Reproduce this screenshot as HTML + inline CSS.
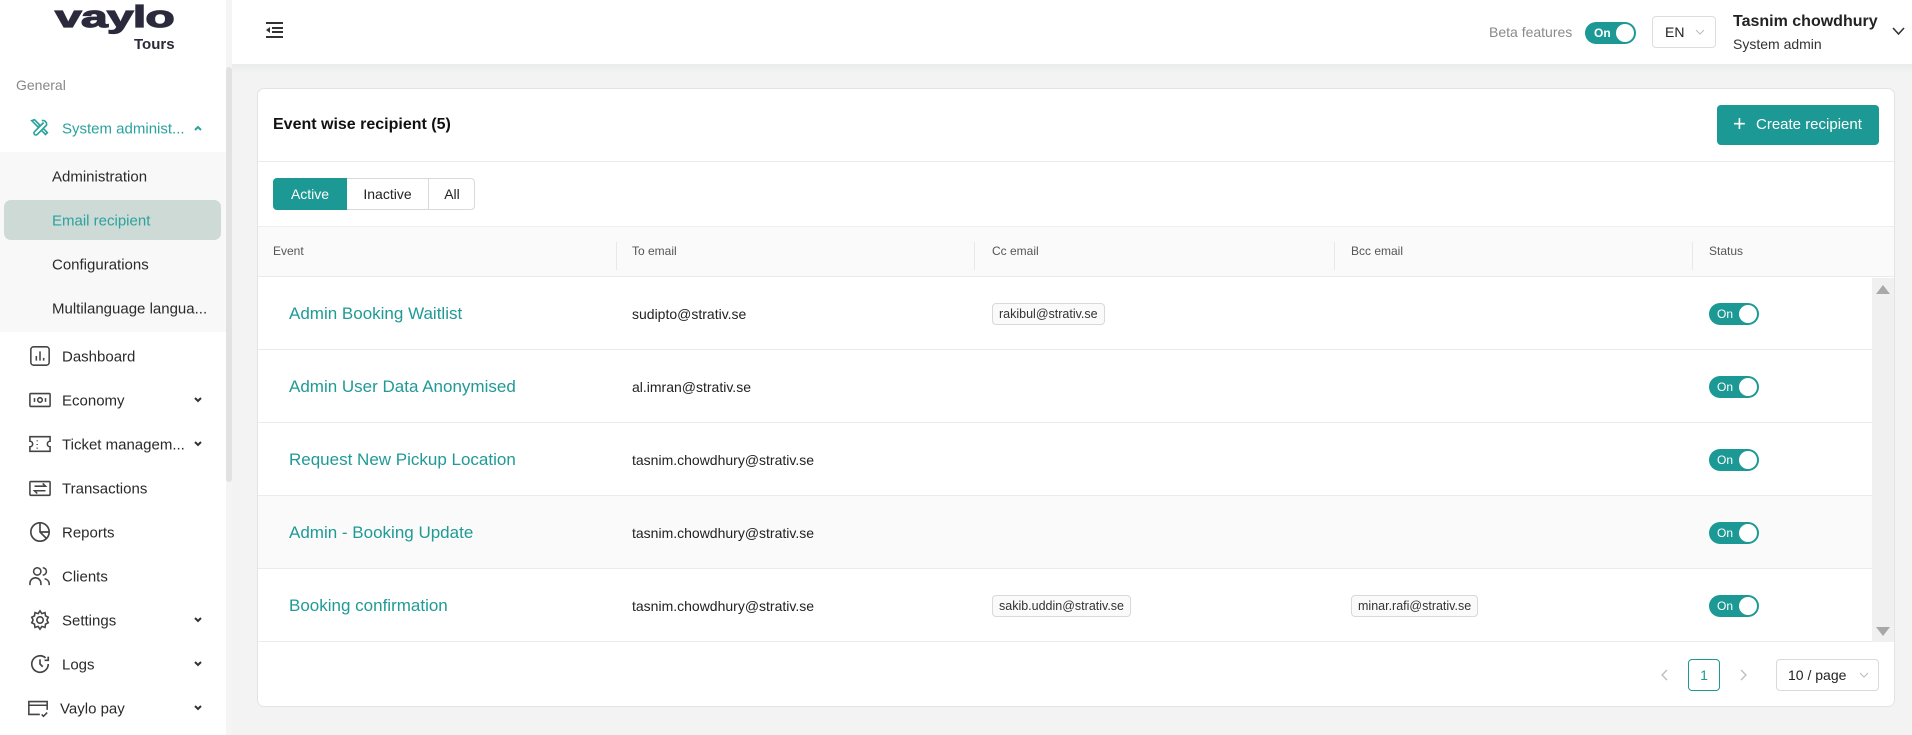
<!DOCTYPE html>
<html><head><meta charset="utf-8">
<style>
*{box-sizing:border-box;margin:0;padding:0}
body{width:1912px;height:735px;overflow:hidden;background:#f3f3f3;font-family:"Liberation Sans",sans-serif;color:#222;position:relative}
.abs{position:absolute}
#side{left:0;top:0;width:226px;height:735px;background:#fff}
.sb{position:absolute;left:226px;top:0;width:6px;height:735px;background:#f5f5f5}
.sbt{position:absolute;left:226px;top:67px;width:6px;height:415px;background:#e2e2e2;border-radius:3px}
.mi{position:absolute;left:62px;font-size:15px;color:#2a2a2a;transform:translateY(-45%)}
.ic{position:absolute;left:29px;width:22px;height:22px;transform:translateY(-50%)}
.chev{position:absolute;left:192px;width:12px;height:12px;transform:translateY(-50%)}
.sub{position:absolute;left:52px;font-size:15px;color:#2a2a2a;transform:translateY(-45%)}
#top{left:232px;top:0;width:1680px;height:64px;background:#fff}
#card{left:257px;top:88px;width:1638px;height:619px;background:#fff;border:1px solid #e3e3e3;border-radius:7px;overflow:hidden}
.th{position:absolute;top:226px;height:51px;background:#fafafa;font-size:12px;color:#555;line-height:51px}
.row{position:absolute;left:258px;width:1614px;height:73px;border-bottom:1px solid #ececec;background:#fff}
.ev{position:absolute;left:31px;top:52%;transform:translateY(-50%);font-size:17px;color:#1f9a96}
.em{position:absolute;left:374px;top:51%;transform:translateY(-50%);font-size:14px;color:#222}
.tag{position:absolute;top:51%;transform:translateY(-50%);font-size:12.5px;color:#333;border:1px solid #d9d9d9;background:#fafafa;border-radius:4px;padding:3px 6px}
.tog{position:absolute;left:1451px;top:52%;transform:translateY(-50%);width:50px;height:22px;border-radius:11px;background:#1c9994}
.tog span{position:absolute;left:8px;top:4px;color:#fff;font-size:12px}
.tog i{position:absolute;right:2px;top:2px;width:18px;height:18px;border-radius:50%;background:#fff}
</style></head><body>
<div id="side" class="abs">
 <div class="abs" style="left:55px;top:1px;font-size:31px;line-height:31px;font-weight:900;color:#2a2a3c;letter-spacing:-0.5px;-webkit-text-stroke:1.2px #2a2a3c;transform:scaleX(1.55);transform-origin:left top">vaylo</div>
 <div class="abs" style="left:134px;top:36px;font-size:15px;font-weight:bold;color:#2a2a3c">Tours</div>
 <div class="abs" style="left:16px;top:77px;font-size:14px;color:#888">General</div>
 <svg class="ic" style="top:128px" viewBox="0 0 24 24" fill="none" stroke="#2aa29d" stroke-width="1.8"><path d="M3 4l3-1 6 6-2 2-6-6z"/><path d="M14 4a4 4 0 0 1 5 5l-10 10a2 2 0 0 1-3-3L16 6"/><path d="M13 14l5 5 2-2-5-5"/></svg>
 <div class="mi" style="top:128px;color:#2aa29d">System administ...</div>
 <svg class="chev" style="top:128px" viewBox="0 0 12 12"><path d="M3 8l3-3 3 3" stroke="#2aa29d" stroke-width="2" fill="none"/></svg>
 <div class="abs" style="left:0;top:152px;width:226px;height:180px;background:#f8f8f8"></div>
 <div class="abs" style="left:4px;top:200px;width:217px;height:40px;background:#cddad6;border-radius:7px"></div>
 <div class="sub" style="top:176px">Administration</div>
 <div class="sub" style="top:220px;color:#2aa29d">Email recipient</div>
 <div class="sub" style="top:264px">Configurations</div>
 <div class="sub" style="top:308px">Multilanguage langua...</div>

 <svg class="ic" style="top:356px" viewBox="0 0 24 24" fill="none" stroke="#444" stroke-width="1.7"><rect x="2" y="2" width="20" height="20" rx="3"/><path d="M8 17v-5M12 17V7M16 17v-3"/></svg>
 <div class="mi" style="top:356px">Dashboard</div>
 <svg class="ic" style="top:400px" viewBox="0 0 24 24" fill="none" stroke="#444" stroke-width="1.7"><rect x="1" y="5" width="22" height="14" rx="1"/><circle cx="12" cy="12" r="2.5"/><path d="M6 10v4M18 10v4"/></svg>
 <div class="mi" style="top:400px">Economy</div>
 <svg class="chev" style="top:400px" viewBox="0 0 12 12"><path d="M3 4l3 3 3-3" stroke="#333" stroke-width="2" fill="none"/></svg>
 <svg class="ic" style="top:444px" viewBox="0 0 24 24" fill="none" stroke="#444" stroke-width="1.7"><path d="M1 4h22v5a3 3 0 0 0 0 6v5H1v-5a3 3 0 0 0 0-6z"/><path d="M9 8v1M9 12v1M9 16v1"/></svg>
 <div class="mi" style="top:444px">Ticket managem...</div>
 <svg class="chev" style="top:444px" viewBox="0 0 12 12"><path d="M3 4l3 3 3-3" stroke="#333" stroke-width="2" fill="none"/></svg>
 <svg class="ic" style="top:488px" viewBox="0 0 24 24" fill="none" stroke="#444" stroke-width="1.7"><rect x="1" y="5" width="22" height="15" rx="1"/><path d="M6 10h12l-3-3M18 15H6l3 3"/></svg>
 <div class="mi" style="top:488px">Transactions</div>
 <svg class="ic" style="top:532px" viewBox="0 0 24 24" fill="none" stroke="#444" stroke-width="1.8"><circle cx="12" cy="12" r="10"/><path d="M12 2v10l7 7M12 12h10"/></svg>
 <div class="mi" style="top:532px">Reports</div>
 <svg class="ic" style="top:576px" viewBox="0 0 24 24" fill="none" stroke="#444" stroke-width="1.7"><circle cx="9" cy="7" r="4"/><path d="M1 22v-2a6 6 0 0 1 12 0v2M15 3a4 4 0 0 1 0 8M17 15a6 6 0 0 1 5 5v2"/></svg>
 <div class="mi" style="top:576px">Clients</div>
 <svg class="ic" style="top:620px" viewBox="0 0 24 24" fill="none" stroke="#444" stroke-width="1.7"><circle cx="12" cy="12" r="3.5"/><path d="M12 2l2 3 3.5-1 .5 3.5L21 9l-1.5 3 1.5 3-3 1.5-.5 3.5-3.5-1-2 3-2-3-3.5 1L6 16.5 3 15l1.5-3L3 9l3-1.5L6.5 4l3.5 1z"/></svg>
 <div class="mi" style="top:620px">Settings</div>
 <svg class="chev" style="top:620px" viewBox="0 0 12 12"><path d="M3 4l3 3 3-3" stroke="#333" stroke-width="2" fill="none"/></svg>
 <svg class="ic" style="top:664px" viewBox="0 0 24 24" fill="none" stroke="#444" stroke-width="1.8"><path d="M21 12a9 9 0 1 1-3-6.7"/><path d="M12 7v5l3 3M21 4v4h-4"/></svg>
 <div class="mi" style="top:664px">Logs</div>
 <svg class="chev" style="top:664px" viewBox="0 0 12 12"><path d="M3 4l3 3 3-3" stroke="#333" stroke-width="2" fill="none"/></svg>
 <svg class="ic" style="top:708px;left:27px" viewBox="0 0 24 24" fill="none" stroke="#444" stroke-width="1.7"><path d="M22 14V5H2v14h12M2 9h20M16 19l2 2 4-4"/></svg>
 <div class="mi" style="top:708px;left:60px">Vaylo pay</div>
 <svg class="chev" style="top:708px" viewBox="0 0 12 12"><path d="M3 4l3 3 3-3" stroke="#333" stroke-width="2" fill="none"/></svg>
</div>
<div class="sb"></div><div class="sbt"></div>

<div id="top" class="abs">
 <svg class="abs" style="left:33px;top:21px" width="19" height="18" viewBox="0 0 19 18"><path d="M1 2h17M7 7h11M7 11h11M1 16h17" stroke="#333" stroke-width="2"/><path d="M5 6v6L1 9z" fill="#333"/></svg>
 <div class="abs" style="left:1257px;top:24px;font-size:14px;color:#8a8a8a">Beta features</div>
 <div class="abs" style="left:1353px;top:22px;width:51px;height:22px;border-radius:11px;background:#1c9994"><span style="position:absolute;left:9px;top:4px;color:#fff;font-size:12px;font-weight:bold">On</span><i style="position:absolute;right:2px;top:2px;width:18px;height:18px;border-radius:50%;background:#fff"></i></div>
 <div class="abs" style="left:1420px;top:16px;width:64px;height:32px;border:1px solid #ddd;border-radius:4px"><span style="position:absolute;left:12px;top:7px;font-size:14px">EN</span><svg style="position:absolute;left:42px;top:12px" width="10" height="7"><path d="M1 1l4 4 4-4" stroke="#bbb" fill="none"/></svg></div>
 <div class="abs" style="left:1501px;top:13px;font-size:16px;font-weight:bold;color:#222">Tasnim chowdhury</div>
 <div class="abs" style="left:1501px;top:36px;font-size:14px;color:#333">System admin</div>
 <svg class="abs" style="left:1660px;top:27px" width="13" height="9"><path d="M1 1l5.5 6L12 1" stroke="#333" stroke-width="1.6" fill="none"/></svg>
</div>
<div class="abs" style="left:232px;top:64px;width:1680px;height:10px;background:linear-gradient(#e9ecec,#f3f3f3)"></div>

<div id="card" class="abs"></div>
<div class="abs" style="left:273px;top:116px;font-size:16px;font-weight:bold;color:#111">Event wise recipient (5)</div>
<div class="abs" style="left:1717px;top:105px;width:162px;height:40px;background:#1c9994;border-radius:4px;color:#fff;font-size:15px;line-height:40px"><span style="position:absolute;left:16px;top:-1px;font-size:22px;font-weight:300">+</span><span style="position:absolute;left:39px">Create recipient</span></div>
<div class="abs" style="left:258px;top:161px;width:1636px;height:1px;background:#eaeaea"></div>
<div class="abs" style="left:273px;top:178px;width:202px;height:32px;border:1px solid #d9d9d9;border-radius:4px;font-size:14px;line-height:30px">
 <div class="abs" style="left:-1px;top:-1px;width:74px;height:32px;background:#1c9994;color:#fff;text-align:center;line-height:32px;border-radius:4px 0 0 4px">Active</div>
 <div class="abs" style="left:73px;top:0;width:82px;height:30px;text-align:center;border-right:1px solid #d9d9d9">Inactive</div>
 <div class="abs" style="left:155px;top:0;width:46px;height:30px;text-align:center">All</div>
</div>
<div class="th" style="left:258px;width:1636px;border-top:1px solid #eee;border-bottom:1px solid #eaeaea"></div>
<div class="th" style="left:273px;background:none">Event</div>
<div class="th" style="left:632px;background:none">To email</div>
<div class="th" style="left:992px;background:none">Cc email</div>
<div class="th" style="left:1351px;background:none">Bcc email</div>
<div class="th" style="left:1709px;background:none">Status</div>
<div class="abs" style="left:616px;top:242px;width:1px;height:28px;background:#e8e8e8"></div>
<div class="abs" style="left:974px;top:242px;width:1px;height:28px;background:#e8e8e8"></div>
<div class="abs" style="left:1334px;top:242px;width:1px;height:28px;background:#e8e8e8"></div>
<div class="abs" style="left:1692px;top:242px;width:1px;height:28px;background:#e8e8e8"></div>

<div class="row" style="top:277px"><div class="ev">Admin Booking Waitlist</div><div class="em">sudipto@strativ.se</div><div class="tag" style="left:734px">rakibul@strativ.se</div><div class="tog"><span>On</span><i></i></div></div>
<div class="row" style="top:350px"><div class="ev">Admin User Data Anonymised</div><div class="em">al.imran@strativ.se</div><div class="tog"><span>On</span><i></i></div></div>
<div class="row" style="top:423px"><div class="ev">Request New Pickup Location</div><div class="em">tasnim.chowdhury@strativ.se</div><div class="tog"><span>On</span><i></i></div></div>
<div class="row" style="top:496px;background:#fafafa"><div class="ev">Admin - Booking Update</div><div class="em">tasnim.chowdhury@strativ.se</div><div class="tog"><span>On</span><i></i></div></div>
<div class="row" style="top:569px"><div class="ev">Booking confirmation</div><div class="em">tasnim.chowdhury@strativ.se</div><div class="tag" style="left:734px">sakib.uddin@strativ.se</div><div class="tag" style="left:1093px">minar.rafi@strativ.se</div><div class="tog"><span>On</span><i></i></div></div>

<div class="abs" style="left:1872px;top:278px;width:22px;height:364px;background:#f0f0f0"></div>
<svg class="abs" style="left:1876px;top:284px" width="14" height="10"><path d="M0 10L7 1l7 9z" fill="#a8a8a8"/></svg>
<svg class="abs" style="left:1876px;top:627px" width="14" height="10"><path d="M0 0h14L7 9z" fill="#a8a8a8"/></svg>

<svg class="abs" style="left:1660px;top:669px" width="8" height="12"><path d="M7 1L2 6l5 5" stroke="#bbb" fill="none" stroke-width="1.3"/></svg>
<div class="abs" style="left:1688px;top:659px;width:32px;height:32px;border:1px solid #1c9994;border-radius:4px;color:#1c9994;text-align:center;line-height:30px;font-size:14px">1</div>
<svg class="abs" style="left:1740px;top:669px" width="8" height="12"><path d="M1 1l5 5-5 5" stroke="#bbb" fill="none" stroke-width="1.3"/></svg>
<div class="abs" style="left:1776px;top:659px;width:103px;height:32px;border:1px solid #d9d9d9;border-radius:4px;font-size:14px;line-height:30px"><span style="position:absolute;left:11px">10 / page</span><svg style="position:absolute;left:82px;top:12px" width="10" height="7"><path d="M1 1l4 4 4-4" stroke="#bbb" fill="none"/></svg></div>
</body></html>
